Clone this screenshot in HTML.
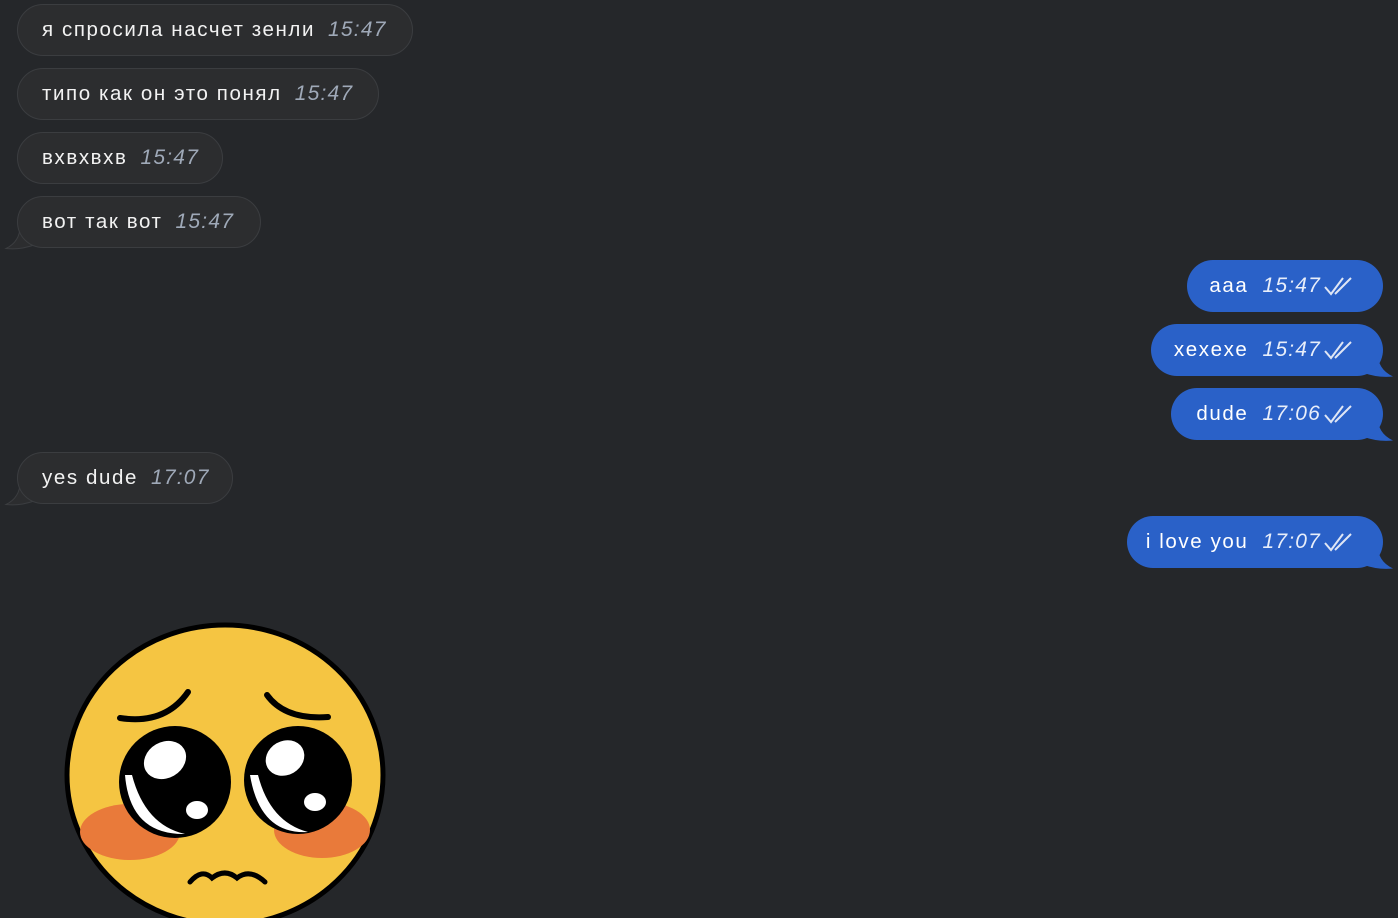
<!DOCTYPE html>
<html><head><meta charset="utf-8"><style>
body{margin:0;width:1398px;height:918px;overflow:hidden;background:#25272a;font-family:"Liberation Sans",sans-serif;position:relative}
.b{position:absolute;height:52px;border-radius:26px;box-sizing:border-box;display:flex;align-items:center;font-size:20.5px;letter-spacing:1.6px;color:#f2f2f2;white-space:nowrap}
.in{background:#2c2d2f;border:1px solid #3b3d40;padding-left:24px}
.out{background:#2a61c8;justify-content:flex-end;padding-right:28px;color:#fff}
.t{font-style:italic;color:#9fa9b8;margin-left:13px;font-size:21px;letter-spacing:1.2px}
.out .t{color:#e8eefa;margin-left:14px;margin-right:2px}
.tail{position:absolute}
</style></head><body>
<svg class="tail" style="left:4px;top:224px" width="34" height="26"><path d="M16 0 Q17 17 2 24.5 Q16 26 30 21 L30 0 Z" fill="#2c2d2f" stroke="#3b3d40" stroke-width="1"/></svg>
<svg class="tail" style="left:4px;top:480px" width="34" height="26"><path d="M16 0 Q17 17 2 24.5 Q16 26 30 21 L30 0 Z" fill="#2c2d2f" stroke="#3b3d40" stroke-width="1"/></svg>
<div class="b in" style="left:17px;top:4px;width:396px">я спросила насчет зенли<span class="t">15:47</span></div>
<div class="b in" style="left:17px;top:68px;width:362px">типо как он это понял<span class="t">15:47</span></div>
<div class="b in" style="left:17px;top:132px;width:206px">вхвхвхв<span class="t">15:47</span></div>
<div class="b in" style="left:17px;top:196px;width:244px">вот так вот<span class="t">15:47</span></div>
<div class="b in" style="left:17px;top:452px;width:216px">yes dude<span class="t">17:07</span></div>

<svg class="tail" style="left:1360px;top:352px" width="36" height="26"><path d="M18 0 Q17 17 33 24.5 Q18 26 4 21 L4 0 Z" fill="#2a61c8"/></svg>
<svg class="tail" style="left:1360px;top:416px" width="36" height="26"><path d="M18 0 Q17 17 33 24.5 Q18 26 4 21 L4 0 Z" fill="#2a61c8"/></svg>
<svg class="tail" style="left:1360px;top:544px" width="36" height="26"><path d="M18 0 Q17 17 33 24.5 Q18 26 4 21 L4 0 Z" fill="#2a61c8"/></svg>
<div class="b out" style="left:1187px;top:260px;width:196px">aaa<span class="t">15:47</span><svg width="32" height="22" viewBox="0 0 32 22"><path d="M2 12 L8 19 L20 3 M12 19 L28 3" stroke="#dfe6f5" stroke-width="2" fill="none"/></svg></div>
<div class="b out" style="left:1151px;top:324px;width:232px">xexexe<span class="t">15:47</span><svg width="32" height="22" viewBox="0 0 32 22"><path d="M2 12 L8 19 L20 3 M12 19 L28 3" stroke="#dfe6f5" stroke-width="2" fill="none"/></svg></div>
<div class="b out" style="left:1171px;top:388px;width:212px">dude<span class="t">17:06</span><svg width="32" height="22" viewBox="0 0 32 22"><path d="M2 12 L8 19 L20 3 M12 19 L28 3" stroke="#dfe6f5" stroke-width="2" fill="none"/></svg></div>
<div class="b out" style="left:1127px;top:516px;width:256px">i love you<span class="t">17:07</span><svg width="32" height="22" viewBox="0 0 32 22"><path d="M2 12 L8 19 L20 3 M12 19 L28 3" stroke="#dfe6f5" stroke-width="2" fill="none"/></svg></div>

<svg style="position:absolute;left:50px;top:610px" width="350" height="308" viewBox="0 0 350 308">
<ellipse cx="175" cy="165" rx="158" ry="150" fill="#f5c542" stroke="#000" stroke-width="5"/>
<ellipse cx="80" cy="222" rx="50" ry="28" fill="#e97a3a"/>
<ellipse cx="272" cy="220" rx="48" ry="28" fill="#e97a3a"/>
<path d="M70 108 Q115 115 138 82" stroke="#000" stroke-width="6" fill="none" stroke-linecap="round"/>
<path d="M217 85 Q235 110 278 107" stroke="#000" stroke-width="6" fill="none" stroke-linecap="round"/>
<circle cx="125" cy="172" r="56" fill="#000"/>
<path d="M75 165 Q80 225 135 224 Q95 215 82 165Z" fill="#fff"/>
<ellipse cx="115" cy="150" rx="22" ry="18" fill="#fff" transform="rotate(-30 115 150)"/>
<ellipse cx="147" cy="200" rx="11" ry="9" fill="#fff"/>
<circle cx="248" cy="170" r="54" fill="#000"/>
<path d="M200 165 Q210 225 258 222 Q220 212 208 165Z" fill="#fff"/>
<ellipse cx="235" cy="148" rx="20" ry="17" fill="#fff" transform="rotate(-30 235 148)"/>
<ellipse cx="265" cy="192" rx="11" ry="9" fill="#fff"/>
<path d="M140 272 Q152 258 162 268 Q175 258 187 268 Q200 258 215 272" stroke="#000" stroke-width="5" fill="none" stroke-linecap="round"/>
</svg>
</body></html>
